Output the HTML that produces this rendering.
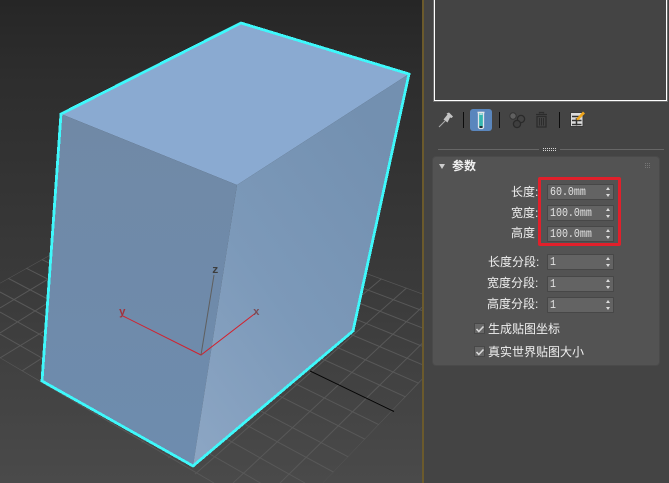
<!DOCTYPE html>
<html><head><meta charset="utf-8"><style>
html,body{margin:0;padding:0;width:669px;height:483px;overflow:hidden;background:#444}
body{position:relative;font-family:"Liberation Sans","WenQuanYi Zen Hei","Noto Sans CJK SC",sans-serif}
#vp{position:absolute;left:0;top:0;width:422px;height:483px;overflow:hidden;background:linear-gradient(#262626,#2d2d2d 15%,#3a3a3a 58%,#4a4a4a)}
#gold{position:absolute;left:422px;top:0;width:2px;height:483px;background:#6b5a2c}
#band{position:absolute;left:424px;top:0;width:5px;height:483px;background:#444}
#prev{position:absolute;left:434px;top:0;width:231px;height:100px;border:1px solid #fff;border-top:0;outline:1px solid #6e6e6e;background:#444}
.a{position:absolute}
.sep{position:absolute;top:112px;width:1px;height:16px;background:#0c0c0c}
#roll{position:absolute;left:433px;top:157px;width:226px;height:208px;background:#535353;border-radius:3px;box-shadow:0 0 0 1px #4a4a4a}
.lb{position:absolute;color:#f0f0f0;font-size:12px;line-height:14px;white-space:nowrap}
.sp{position:absolute;left:547px;width:65px;height:14px;background:#636363;border:1px solid #474747;border-radius:1px;color:#e2e2e2;font:12px/15px "Liberation Mono",monospace;overflow:hidden}
.sp span{display:inline-block;margin-left:2px;transform:scaleX(.83);transform-origin:0 50%}
.sp:after{content:"";position:absolute;right:3px;top:2px;border-left:2.5px solid transparent;border-right:2.5px solid transparent;border-bottom:3.5px solid #ddd}
.sp:before{content:"";position:absolute;right:3px;bottom:2px;border-left:2.5px solid transparent;border-right:2.5px solid transparent;border-top:3.5px solid #ddd}
.cb{position:absolute;left:474px;width:9px;height:9px;background:#666;border:1px solid #484848}
#red{position:absolute;left:538px;top:177px;width:77px;height:63px;border:3px solid #e1202b;border-radius:2px}
</style></head><body>
<div id="vp">
<svg width="422" height="483" style="position:absolute;left:0;top:0">
<defs>
<clipPath id="g"><polygon points="0,283 130,210 366,273 422,293.5 422,380 392,411 323,483 210,483 0,358"/></clipPath>
<linearGradient id="rf" x1="0.1" y1="1" x2="0.8" y2="0.1"><stop offset="0" stop-color="#8ba5c3"/><stop offset="0.45" stop-color="#7c99b9"/><stop offset="1" stop-color="#7390b0"/></linearGradient>
<linearGradient id="lf" x1="0" y1="0" x2="0" y2="1"><stop offset="0" stop-color="#7089a6"/><stop offset="1" stop-color="#6e8cae"/></linearGradient>
</defs>
<g clip-path="url(#g)" stroke="#585858" stroke-width="1" fill="none">
<path d="M0 140L422 293.6M0 151L422 310.5M0 162L422 327.8M0 174L422 346.2M0 186L422 364.5M0 199L422 384.7M0 212L422 404.4M0 225L422 424.2M0 239L422 445.8M0 255L422 468M0 274L398 483M0 292L353.7 483M0 312L305 483M0 334L260.5 483M0 358L214 483"/>
<path d="M323.4 483L422 379.3M280 483L422 343.6M233 483L422 307.2M185 483L422 274.4M138.6 483L392 270M91 483L357.5 270"/>
<path d="M0 283L100 227M0 308L100 248M0 333L100 270M0 358L100 297M0 385L100 321"/>
</g>
<line x1="310" y1="371" x2="394" y2="411.5" stroke="#050505" stroke-width="1"/>
<polygon points="241,23 409,74 237,185 61,114" fill="#8aaad1"/>
<polygon points="61,114 237,185 193,466 42,381" fill="url(#lf)"/>
<polygon points="237,185 409,74 353,331 193,466" fill="url(#rf)"/>
<polygon points="241,23 409,74 353,331 193,466 42,381 61,114" fill="none" stroke="#3ff8fb" stroke-width="2.8" shape-rendering="crispEdges"/>
<path d="M123 316L201 355L257 312" fill="none" stroke="#d3202c" stroke-width="1"/>
<line x1="201" y1="355" x2="214" y2="275" stroke="#5f5f5f" stroke-width="1"/>
<text x="119" y="315" font-family="Liberation Mono" font-size="11" font-weight="bold" fill="#a3303a">y</text>
<text x="253" y="315" font-family="Liberation Mono" font-size="11" font-weight="bold" fill="#7a4b55">x</text>
<text x="212" y="273" font-family="Liberation Mono" font-size="11" font-weight="bold" fill="#3d3d3d">z</text>
</svg>
</div>
<div id="gold"></div><div id="band"></div>
<div id="prev"></div>

<svg class="a" style="left:436px;top:110px" width="20" height="20"><path d="M3 17L9 11" stroke="#aaa" stroke-width="1.1"/><path d="M7.5 9.5L11.5 4.5L10.5 3.5L13 2.5L17 6.5L15.5 8L14 7.5L11.5 12.5Z" fill="#c4c4c4"/></svg>
<div class="sep" style="left:463px"></div>
<div class="a" style="left:470px;top:109px;width:22px;height:22px;background:#5a86bd;border-radius:3px"></div>
<svg class="a" style="left:470px;top:109px" width="22" height="22"><path d="M7.5 3.5H14.5" stroke="#e8e8e8" stroke-width="1.6"/><path d="M8.5 4V18.5L9.5 19.5H12.5L13.5 18.5V4" fill="#36b6b0" stroke="#dfe5ea" stroke-width="1.3"/><rect x="9.5" y="4.3" width="3" height="1.5" fill="#cfe8ee"/><rect x="9.5" y="17" width="3" height="2" fill="#1f2f36"/></svg>
<div class="sep" style="left:499px"></div>
<svg class="a" style="left:508px;top:110px" width="20" height="20"><circle cx="5" cy="6" r="3.2" fill="#606060" stroke="#333"/><circle cx="13" cy="9" r="3.6" fill="none" stroke="#2a2a2a" stroke-width="1.3"/><circle cx="9" cy="14" r="3.6" fill="#3f3f3f" stroke="#2a2a2a" stroke-width="1.3"/></svg>
<svg class="a" style="left:531px;top:110px" width="20" height="20"><path d="M5 4.5H16M8.5 3.5V2.5H12.5V3.5" fill="none" stroke="#2c2c2c" stroke-width="1.3"/><path d="M6 6.5H15V17H6Z" fill="none" stroke="#2c2c2c" stroke-width="1.3"/><path d="M8.5 8V15.5M10.5 8V15.5M12.5 8V15.5" stroke="#2c2c2c" stroke-width="1"/></svg>
<div class="sep" style="left:559px"></div>
<svg class="a" style="left:569px;top:110px" width="18" height="18"><rect x="1.5" y="2.5" width="12.5" height="14" fill="#dcdcdc" stroke="#3a3a3a" stroke-width="1"/><path d="M3 6.5H12.5M3 10.5H12.5M3 14.5H12.5M7.5 8V15.5" stroke="#333" stroke-width="1.5"/><path d="M7 9L14 1.5L16 3.5L9 10.5Z" fill="#eea51c"/></svg>

<div class="a" style="left:438px;top:149px;width:101px;height:1px;background:#666"></div>
<svg class="a" style="left:543px;top:147px" width="14" height="4"><path d="M0 1.5H14M0 3.5H14" stroke="#d8d8d8" stroke-width="1" stroke-dasharray="1 1"/></svg>
<div class="a" style="left:560px;top:149px;width:104px;height:1px;background:#666"></div>

<div id="roll"></div>
<div class="a" style="left:439px;top:164px;border-left:3px solid transparent;border-right:3px solid transparent;border-top:5px solid #ccc"></div>
<div class="lb" style="left:452px;top:159px;font-weight:bold">参数</div>
<svg class="a" style="left:645px;top:163px" width="6" height="6"><path d="M0 .5H6M0 2.5H6M0 4.5H6" stroke="#767676" stroke-width="1" stroke-dasharray="1 1"/></svg>

<div class="lb" style="left:511px;top:185px">长度:</div>
<div class="lb" style="left:511px;top:206px">宽度:</div>
<div class="lb" style="left:511px;top:226px">高度</div>
<div class="lb" style="left:488px;top:255px">长度分段:</div>
<div class="lb" style="left:487px;top:276px">宽度分段:</div>
<div class="lb" style="left:487px;top:297px">高度分段:</div>

<div class="sp" style="top:184px"><span>60.0mm</span></div>
<div class="sp" style="top:205px"><span>100.0mm</span></div>
<div class="sp" style="top:226px"><span>100.0mm</span></div>
<div class="sp" style="top:254px"><span>1</span></div>
<div class="sp" style="top:276px"><span>1</span></div>
<div class="sp" style="top:297px"><span>1</span></div>
<div id="red"></div>

<div class="cb" style="top:323px"></div>
<div class="cb" style="top:346px"></div>
<svg class="a" style="left:474px;top:323px" width="13" height="36"><path d="M2.5 6L4.8 8.5L9.5 3.5M2.5 29L4.8 31.5L9.5 26.5" fill="none" stroke="#d8d8d8" stroke-width="1.6"/></svg>
<div class="lb" style="left:488px;top:322px">生成贴图坐标</div>
<div class="lb" style="left:488px;top:345px">真实世界贴图大小</div>
</body></html>
